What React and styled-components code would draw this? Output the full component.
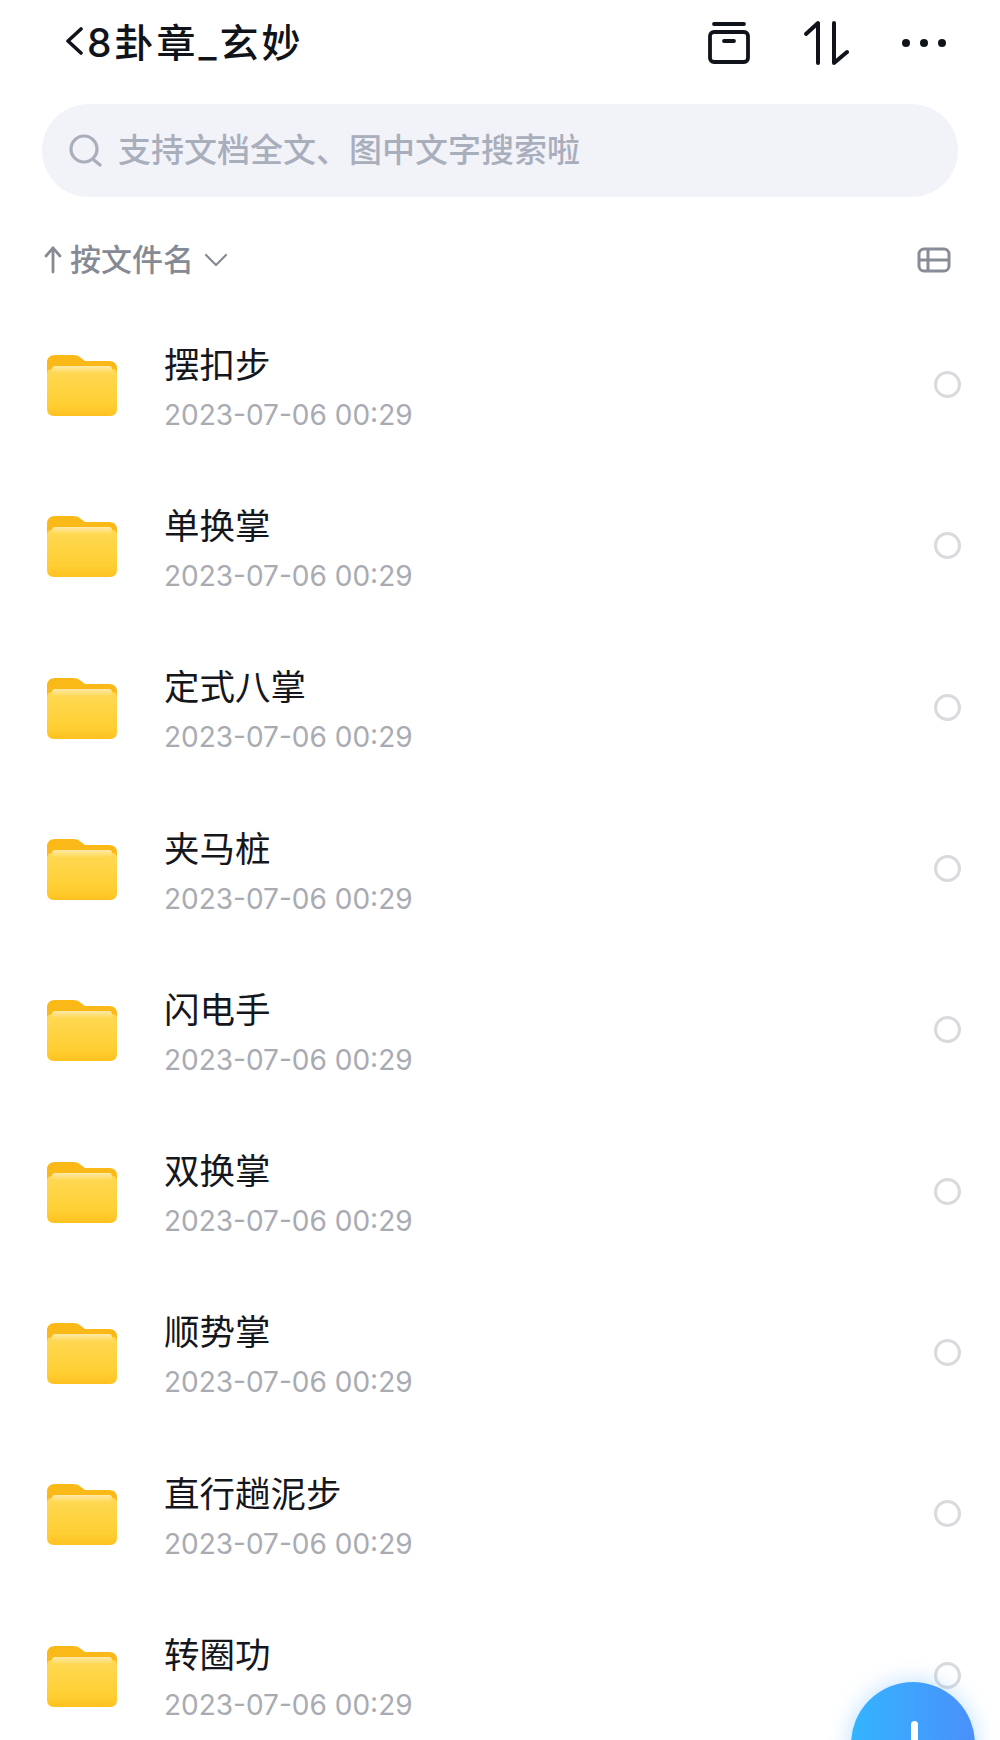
import React from 'react';
import styled, { createGlobalStyle } from 'styled-components';

const GlobalStyle = createGlobalStyle`
  html, body {
    margin: 0;
    padding: 0;
    background: #fff;
  }
  body {
    font-family: Inter, "Noto Sans CJK SC", sans-serif;
  }
`;

const Page = styled.div`
  position: relative;
  width: 1000px;
  height: 1740px;
  overflow: hidden;
  background: #fff;
`;

const Header = styled.header`
  display: flex;
  align-items: center;
  justify-content: space-between;
  height: 86px;
  padding: 0 53px 0 65px;
`;

const TitleGroup = styled.div`
  display: flex;
  align-items: center;
  gap: 4px;
`;

const BackSvg = styled.svg`
  margin-top: -4px;
`;

const Title = styled.h1`
  margin: 0;
  font-size: 39px;
  line-height: 86px;
  font-weight: 500;
  letter-spacing: 3px;
  color: #10131a;
`;

const HeaderIcons = styled.div`
  display: flex;
  align-items: center;
  gap: 52px;
`;

const SearchBar = styled.div`
  display: flex;
  align-items: center;
  gap: 16px;
  height: 93px;
  margin: 18px 42px 0;
  padding: 0 0 0 26px;
  border-radius: 47px;
  background: #f2f3f8;
`;

const SearchSvg = styled.svg`
  margin-top: -2px;
`;

const SearchText = styled.span`
  font-size: 33px;
  line-height: 40px;
  margin-top: -2px;
  font-weight: 500;
  color: #a9aebc;
`;

const SortRow = styled.div`
  display: flex;
  align-items: center;
  justify-content: space-between;
  height: 60px;
  margin-top: 33px;
  padding: 0 49px 0 44px;
`;

const SortLabel = styled.div`
  display: flex;
  align-items: center;
  gap: 10px;
  font-size: 31px;
  line-height: 40px;
  font-weight: 500;
  color: #858a94;
`;

const SortName = styled.span`
  margin-left: -2px;
`;

const FileList = styled.div`
  display: flex;
  flex-direction: column;
  margin-top: 14px;
`;

const Row = styled.div`
  display: flex;
  align-items: center;
  flex: none;
  height: 161.3px;
  padding: 0 39px 0 46px;
`;

const RowText = styled.div`
  display: flex;
  flex-direction: column;
  flex: 1;
  margin-left: 46px;
  padding-top: 8px;
`;

const RowName = styled.div`
  font-size: 35.5px;
  line-height: 50px;
  color: #15171c;
`;

const RowDate = styled.div`
  font-size: 28px;
  line-height: 44px;
  margin-top: 2px;
  color: #a9abb2;
`;

const Radio = styled.span`
  flex: none;
  width: 21px;
  height: 21px;
  border: 3px solid #d9dadd;
  border-radius: 50%;
`;

const Fab = styled.div`
  position: absolute;
  left: 851px;
  top: 1682px;
  width: 124px;
  height: 124px;
  border-radius: 50%;
  background: linear-gradient(90deg, #34b4ff 0%, #4a90fb 100%);
  box-shadow: 0 0 22px rgba(60, 160, 255, 0.35);
`;

const FabBar = styled.span`
  position: absolute;
  left: 60px;
  top: 39px;
  width: 7px;
  height: 60px;
  border-radius: 4px;
  background: #fff;
`;

const BackIcon = () => (
  <BackSvg width="18" height="30" viewBox="0 0 18 30" fill="none" stroke="#10131a" strokeWidth="3.6" strokeLinecap="round" strokeLinejoin="round">
    <path d="M16 3 L3 15 L16 27" />
  </BackSvg>
);

const BoxIcon = () => (
  <svg width="44" height="44" viewBox="0 0 44 44" fill="none" stroke="#10131a" strokeWidth="3.8" strokeLinecap="round" strokeLinejoin="round">
    <path d="M7 3 H37" />
    <rect x="3" y="11" width="38" height="30" rx="4" />
    <path d="M17 20 H27" />
  </svg>
);

const SortIcon = () => (
  <svg width="46" height="46" viewBox="0 0 46 46" fill="none" stroke="#10131a" strokeWidth="4" strokeLinecap="round" strokeLinejoin="round">
    <path d="M3 14 L15 3 V43" />
    <path d="M31 3 V43 L44 32" />
  </svg>
);

const DotsIcon = () => (
  <svg width="46" height="10" viewBox="0 0 46 10" fill="#10131a">
    <circle cx="5" cy="5" r="4" />
    <circle cx="23" cy="5" r="4" />
    <circle cx="41" cy="5" r="4" />
  </svg>
);

const SearchIcon = () => (
  <SearchSvg width="34" height="34" viewBox="0 0 34 34" fill="none" stroke="#a9aebc" strokeWidth="3.2" strokeLinecap="round">
    <circle cx="16" cy="16" r="13" />
    <path d="M26 27 L32 32" />
  </SearchSvg>
);

const UpArrow = () => (
  <svg width="18" height="28" viewBox="0 0 18 28" fill="none" stroke="#858a94" strokeWidth="2.8" strokeLinecap="round" strokeLinejoin="round">
    <path d="M2 10 L9 2 L16 10" />
    <path d="M9 2 V26" />
  </svg>
);

const ChevronDown = () => (
  <svg width="24" height="14" viewBox="0 0 24 14" fill="none" stroke="#858a94" strokeWidth="2.2" strokeLinecap="round" strokeLinejoin="round">
    <path d="M2 2 L12 12 L22 2" />
  </svg>
);

const TableIcon = () => (
  <svg width="34" height="26" viewBox="0 0 34 26" fill="none" stroke="#888c96" strokeWidth="3">
    <rect x="2" y="2" width="30" height="22" rx="5" />
    <path d="M2 13 H32" />
    <path d="M11 2 V24" />
  </svg>
);

const FolderSvg = styled.svg`
  flex: none;
  margin-top: 3px;
`;

const FolderIcon = ({ id }) => (
  <FolderSvg width="72" height="62" viewBox="0 0 72 62">
    <defs>
      <linearGradient id={`front-${id}`} x1="0" y1="0" x2="0" y2="1">
        <stop offset="0" stopColor="#ffd955" />
        <stop offset="0.75" stopColor="#ffcf33" />
        <stop offset="1" stopColor="#fdc120" />
      </linearGradient>
      <linearGradient id={`sheet-${id}`} x1="0" y1="0" x2="0" y2="1">
        <stop offset="0" stopColor="#ffe9a8" />
        <stop offset="1" stopColor="#ffd955" />
      </linearGradient>
    </defs>
    <path d="M1 8 Q1 0 9 0 H28 Q32 0 35 3 L39 6 H63 Q71 6 71 14 V30 H1 Z" fill="#fbb918" />
    <path d="M1 19 Q1 14 6 14 H66 Q71 14 71 19 V54 Q71 61 64 61 H8 Q1 61 1 54 Z" fill={`url(#front-${id})`} />
    <rect x="6" y="11" width="60" height="7" rx="3" fill={`url(#sheet-${id})`} />
  </FolderSvg>
);

const folders = ['摆扣步', '单换掌', '定式八掌', '夹马桩', '闪电手', '双换掌', '顺势掌', '直行趟泥步', '转圈功'];

const App = () => {
  return (
    <Page>
      <GlobalStyle />
      <Header>
        <TitleGroup>
          <BackIcon />
          <Title>8卦章_玄妙</Title>
        </TitleGroup>
        <HeaderIcons>
          <BoxIcon />
          <SortIcon />
          <DotsIcon />
        </HeaderIcons>
      </Header>
      <SearchBar>
        <SearchIcon />
        <SearchText>支持文档全文、图中文字搜索啦</SearchText>
      </SearchBar>
      <SortRow>
        <SortLabel>
          <UpArrow />
          <SortName>按文件名</SortName>
          <ChevronDown />
        </SortLabel>
        <TableIcon />
      </SortRow>
      <FileList>
        {folders.map((name, i) => (
          <Row key={name}>
            <FolderIcon id={i} />
            <RowText>
              <RowName>{name}</RowName>
              <RowDate>2023-07-06 00:29</RowDate>
            </RowText>
            <Radio />
          </Row>
        ))}
      </FileList>
      <Fab>
        <FabBar />
      </Fab>
    </Page>
  );
};

export default App;
